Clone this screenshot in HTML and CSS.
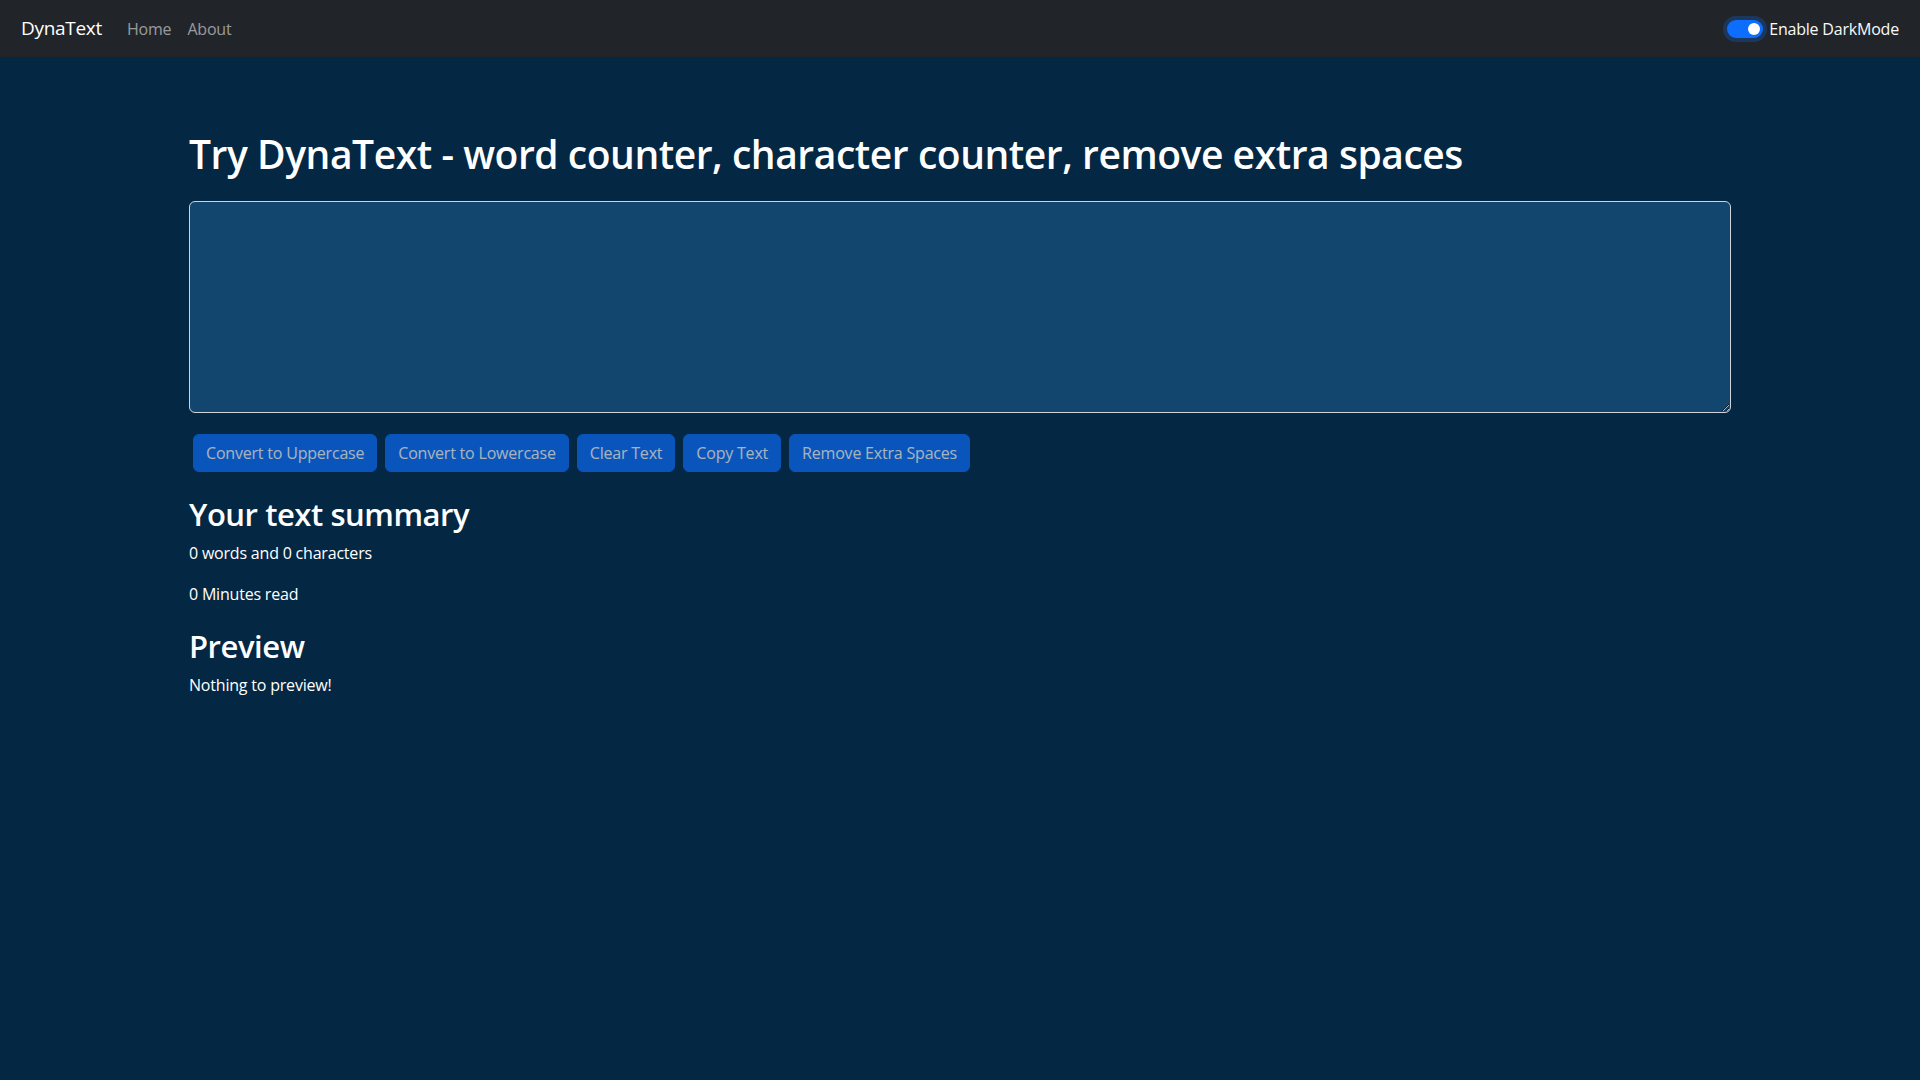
FILE: index.html
```html
<!DOCTYPE html>
<html lang="en">
<head>
<meta charset="utf-8">
<title>DynaText</title>
<link rel="stylesheet" href="styles.css">
</head>
<body>
<nav class="navbar">
  <div class="nav-left">
    <a class="brand" href="#">DynaText</a>
    <ul class="nav-links">
      <li><a href="#">Home</a></li>
      <li><a href="#">About</a></li>
    </ul>
  </div>
  <div class="mode-switch">
    <span class="switch"><span class="knob"></span></span>
    <label class="switch-label">Enable DarkMode</label>
  </div>
</nav>
<div class="alert-space"></div>
<main class="container editor">
  <h1 class="title">Try DynaText - word counter, character counter, remove extra spaces</h1>
  <div class="field">
    <textarea class="text-input" rows="8"></textarea>
  </div>
  <div class="actions">
    <button class="btn" disabled>Convert to Uppercase</button>
    <button class="btn" disabled>Convert to Lowercase</button>
    <button class="btn" disabled>Clear Text</button>
    <button class="btn" disabled>Copy Text</button>
    <button class="btn" disabled>Remove Extra Spaces</button>
  </div>
</main>
<section class="container summary">
  <h2 class="sub">Your text summary</h2>
  <p class="line">0 words and 0 characters</p>
  <p class="line">0 Minutes read</p>
  <h2 class="sub preview-head">Preview</h2>
  <p class="line">Nothing to preview!</p>
</section>
</body>
</html>
```
FILE: styles.css
```css
* { box-sizing: border-box; }
html, body { margin: 0; padding: 0; }
body {
  background: #042743;
  color: #fff;
  font-family: "Open Sans", "Noto Sans", sans-serif;
  font-size: 16px;
  line-height: 1.5;
  letter-spacing: -0.2px;
  min-height: 1080px;
}
.navbar {
  height: 57px;
  background: #212529;
  display: flex;
  align-items: center;
  justify-content: space-between;
  padding: 0 21px 0 21px;
}
.nav-left { display: flex; align-items: center; }
.brand {
  color: #fff;
  text-decoration: none;
  font-size: 19px;
  letter-spacing: -0.3px;
  margin-right: 17px;
}
.nav-links { list-style: none; margin: 0; padding: 0; display: flex; }
.nav-links a {
  display: block;
  color: rgba(255,255,255,.55);
  text-decoration: none;
  padding: 8px 8px;
}
.mode-switch { display: flex; align-items: center; gap: 6px; }
.switch {
  width: 36px; height: 18px;
  border-radius: 9px;
  background: #0d6efd;
  box-shadow: 0 0 0 4px rgba(13,110,253,.25);
  position: relative;
}
.knob {
  position: absolute;
  right: 3px; top: 3px;
  width: 12px; height: 12px;
  border-radius: 50%;
  background: #fff;
}
.switch-label { color: #f8f9fa; }
.alert-space { height: 57px; }
.container {
  max-width: 1566px;
  margin: 16px auto;
  padding: 0 12px;
}
.title {
  font-size: 39px;
  font-weight: 600;
  letter-spacing: -0.45px;
  line-height: 48px;
  margin: 0 0 23px;
}
.field { margin: 0; }
.text-input {
  display: block;
  width: 100%;
  height: 212px;
  background: #13466e;
  color: #fff;
  border: 1px solid #ced4da;
  border-radius: 6px;
  padding: 6px 12px;
  font: inherit;
  resize: vertical;
}
.actions { display: flex; gap: 8px; padding: 0 4px; margin: 21px 0 23px; }
.btn {
  font: inherit;
  letter-spacing: -0.2px;
  color: #fff;
  background: #0d6efd;
  border: 1px solid #0d6efd;
  border-radius: 6px;
  padding: 6px 12px;
  line-height: 24px;
  opacity: .65;
}
.sub {
  font-size: 31px;
  font-weight: 600;
  letter-spacing: -0.45px;
  line-height: 38px;
  margin: 0 0 8px;
}
.preview-head { margin-top: 21px; }
.line { margin: 0 0 17px; }
```
